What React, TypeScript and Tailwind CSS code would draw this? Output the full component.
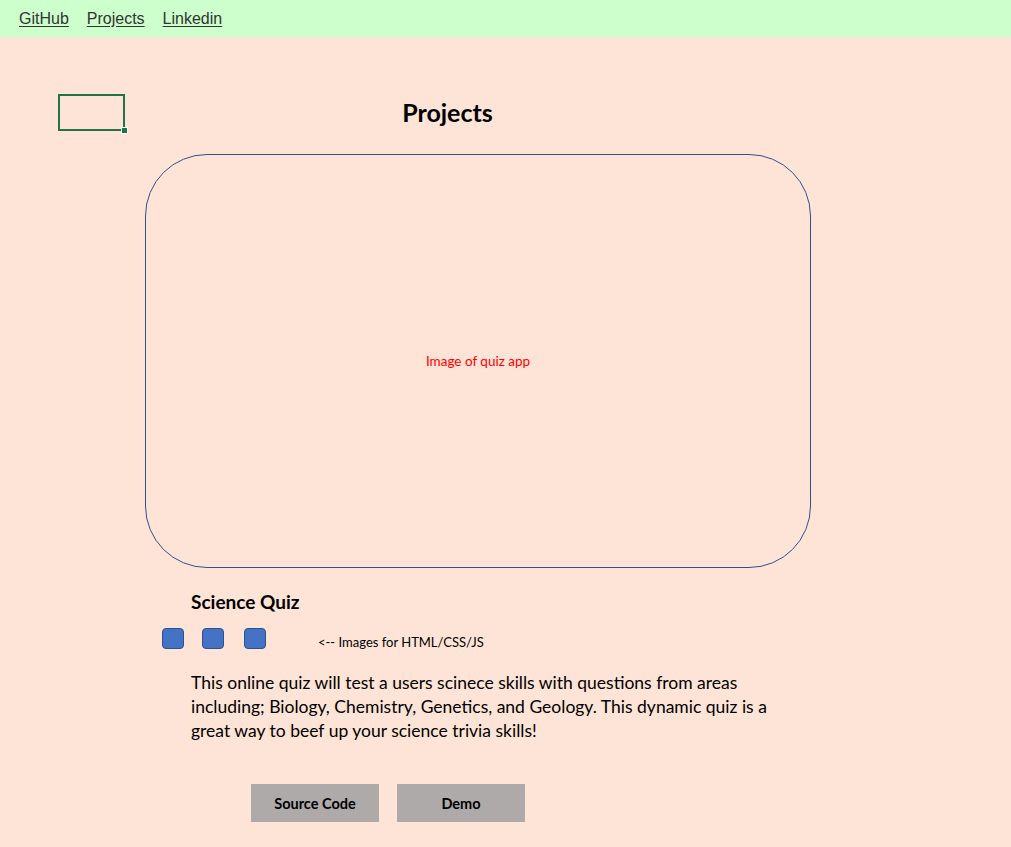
import React from 'react';

const links = ['GitHub', 'Projects', 'Linkedin'];

const App: React.FC = () => {
    return (
        <div className="min-h-screen w-full bg-[#fde4d6] font-['Lato','Open_Sans',sans-serif] text-black">
            {/* nav */}
            <nav className="h-[37px] bg-[#ccffcc] flex items-center gap-[18px] pl-[19px] font-['Liberation_Sans',Arial,sans-serif] text-[16px] text-[#333]">
                {links.map((l) => (
                    <a key={l} href="#" className="underline underline-offset-2">{l}</a>
                ))}
            </nav>

            <div className="relative">
                {/* excel-like cell selection */}
                <div className="absolute left-[58px] top-[57px] w-[67px] h-[37px] border-2 border-[#217346]">
                    <span className="absolute right-[-5px] bottom-[-5px] w-[7px] h-[7px] bg-[#217346] border border-white"></span>
                </div>

                <h1 className="pt-[58px] h-[117px] text-center text-[25px] font-bold leading-[34px] w-[895px]">Projects</h1>

                <div className="ml-[145px] w-[666px] h-[414px] rounded-[62px] border border-[#2f528f] flex items-center justify-center">
                    <span className="text-[13.5px] text-[#ff0000] mt-[1px]">Image of quiz app</span>
                </div>

                <h2 className="ml-[191px] mt-[22px] text-[19px] font-bold leading-[24px]">Science Quiz</h2>

                <div className="flex items-center mt-[11px] ml-[162px]">
                    <span className="w-[22px] h-[21px] rounded-[4px] bg-[#4472c4] border border-[#2f528f]"></span>
                    <span className="w-[22px] h-[21px] rounded-[4px] bg-[#4472c4] border border-[#2f528f] ml-[18px]"></span>
                    <span className="w-[22px] h-[21px] rounded-[4px] bg-[#4472c4] border border-[#2f528f] ml-[20px]"></span>
                    <span className="ml-[52px] mt-[8px] text-[13px]">&lt;-- Images for HTML/CSS/JS</span>
                </div>

                <p className="ml-[191px] mt-[18px] w-[585px] text-[17.5px] leading-[24px]">
                    This online quiz will test a users scinece skills with questions from areas including; Biology, Chemistry, Genetics, and Geology. This dynamic quiz is a great way to beef up your science trivia skills!
                </p>

                <div className="flex gap-[18px] ml-[251px] mt-[41px]">
                    <button className="w-[128px] h-[38px] pt-[3px] bg-[#aeaaaa] text-[14.5px] font-bold">Source Code</button>
                    <button className="w-[128px] h-[38px] pt-[3px] bg-[#aeaaaa] text-[14.5px] font-bold">Demo</button>
                </div>
            </div>
        </div>
    );
};

export default App;
